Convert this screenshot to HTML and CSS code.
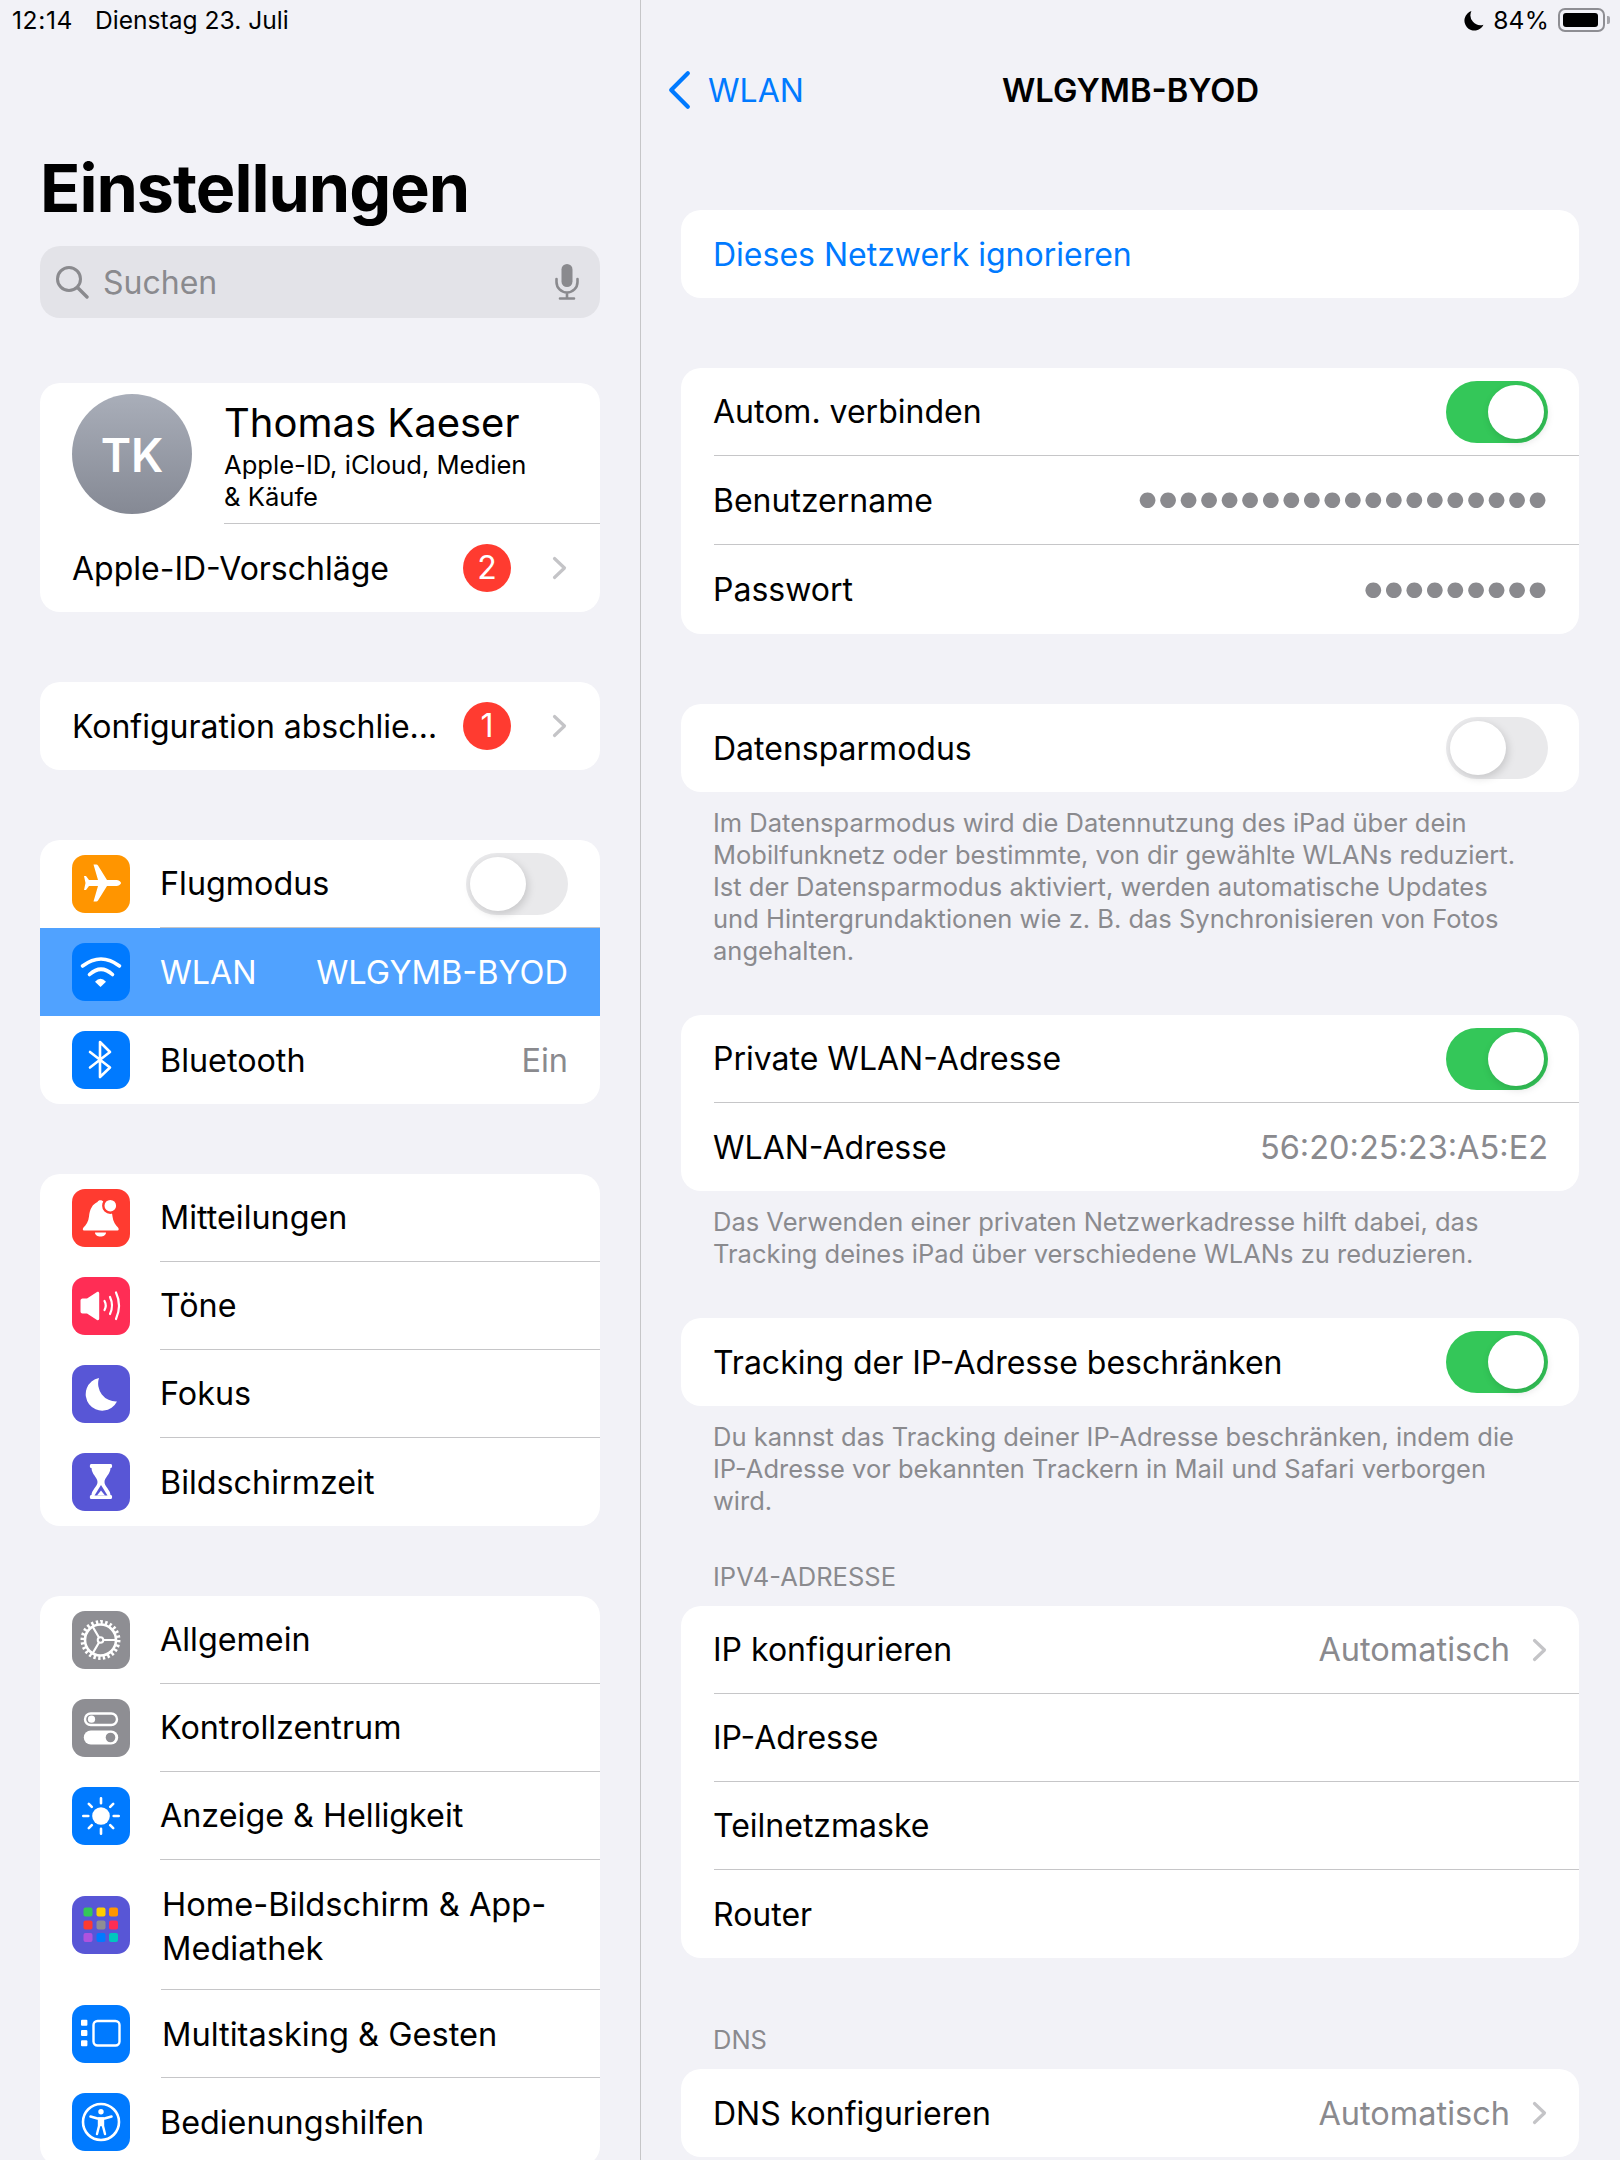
FILE: index.html
```html
<!DOCTYPE html>
<html lang="de">
<head>
  <meta charset="UTF-8">
  <title>Einstellungen</title>
  <link rel="stylesheet" href="styles.css">
</head>
<body>
<div class="page">

  <aside class="sidebar">
    <div class="status">
      <span class="status-time">12:14</span>
      <span>Dienstag 23. Juli</span>
    </div>

    <h1 class="title">Einstellungen</h1>

    <div class="search">
      <svg class="search-icon" viewBox="0 0 34 34"><circle cx="14" cy="14" r="11.5" fill="none" stroke="#8a8a8e" stroke-width="3"/><path d="M22.5 22.5L32 32" stroke="#8a8a8e" stroke-width="3.4" stroke-linecap="round"/></svg>
      <span class="search-text">Suchen</span>
      <svg class="mic-icon" viewBox="0 0 26 36"><rect x="7.5" y="0" width="11" height="23" rx="5.5" fill="#8a8a8e"/><path d="M2.5 15v3a10.5 10.5 0 0 0 21 0v-3M13 29v5M6 34.5h14" fill="none" stroke="#8a8a8e" stroke-width="2.6" stroke-linecap="round"/></svg>
    </div>

    <section class="card">
      <div class="profile">
        <div class="avatar">TK</div>
        <div class="profile-body">
          <div class="profile-name">Thomas Kaeser</div>
          <div class="profile-sub">Apple-ID, iCloud, Medien<br>&amp; Käufe</div>
        </div>
      </div>
      <div class="row row-plain">
        <div class="row-body">
          <span class="grow">Apple-ID-Vorschläge</span>
          <span class="badge">2</span>
          <svg class="chevron" viewBox="0 0 15 24"><path d="M2.5 2.5L12.5 12L2.5 21.5"/></svg>
        </div>
      </div>
    </section>

    <section class="card">
      <div class="row row-plain">
        <div class="row-body">
          <span class="grow clip">Konfiguration abschlie…</span>
          <span class="badge">1</span>
          <svg class="chevron" viewBox="0 0 15 24"><path d="M2.5 2.5L12.5 12L2.5 21.5"/></svg>
        </div>
      </div>
    </section>

    <section class="card">
      <div class="row">
        <svg class="icon" viewBox="0 0 58 58"><rect width="58" height="58" rx="13" fill="#ff9500"/><path d="M49 28c0 1.5-2.5 3-5 3H35L26 45.5c-.4.7-1 1-1.7 1H21.5L26 31H17l-3 4h-2l1.5-7-1.5-7h2l3 4h9L21.5 9.5h2.8c.7 0 1.3.3 1.7 1L35 25h9c2.5 0 5 1.5 5 3z" fill="#fff"/></svg>
        <div class="row-body">
          <span class="grow">Flugmodus</span>
          <span class="switch"></span>
        </div>
      </div>
      <div class="row row-selected">
        <svg class="icon" viewBox="0 0 58 58"><rect width="58" height="58" rx="13" fill="#007aff"/><path d="M10.5 23Q29 9 47.5 23M17.5 31.5Q29 21 40.5 31.5" fill="none" stroke="#fff" stroke-width="3.6" stroke-linecap="round"/><path d="M23 38.7Q28.5 33 34 38.7L28.5 44z" fill="#fff"/></svg>
        <div class="row-body">
          <span class="grow">WLAN</span>
          <span class="selected-value">WLGYMB-BYOD</span>
        </div>
      </div>
      <div class="row">
        <svg class="icon" viewBox="0 0 58 58"><rect width="58" height="58" rx="13" fill="#007aff"/><path d="M18 21L38 36.5L28 46V11L38 21L18 36.5" fill="none" stroke="#fff" stroke-width="2.6" stroke-linecap="round" stroke-linejoin="round"/></svg>
        <div class="row-body">
          <span class="grow">Bluetooth</span>
          <span class="value">Ein</span>
        </div>
      </div>
    </section>

    <section class="card">
      <div class="row">
        <svg class="icon" viewBox="0 0 58 58"><rect width="58" height="58" rx="13" fill="#ff3b30"/><path d="M12 41.5c-1.5 0-1.5-2-.5-3 2.5-2.5 5-6 5.5-11 .6-7 3.5-12.5 8.5-14.5.8-2.5 5-2.5 6 0 5 2 8.5 7.5 9 14.5.5 5 3 8.5 5.5 11 1 1 1 3-.5 3zM23 43.5h11c0 2.5-2.5 4-5.5 4s-5.5-1.5-5.5-4z" fill="#fff"/><circle cx="38.3" cy="16.7" r="7" fill="#fff" stroke="#ff3b30" stroke-width="2.4"/></svg>
        <div class="row-body"><span class="grow">Mitteilungen</span></div>
      </div>
      <div class="row">
        <svg class="icon" viewBox="0 0 58 58"><rect width="58" height="58" rx="13" fill="#ff2d55"/><path d="M8.5 23.5c0-1 .8-2 2-2h4.5l10-6.5c1.2-.7 2.2 0 2.2 1.2v25.6c0 1.2-1 1.9-2.2 1.2l-10-6.5h-4.5c-1.2 0-2-1-2-2z" fill="#fff"/><path d="M32.5 24Q35 28.5 32.5 33M38 20Q42 28.5 38 37M44 15.5Q50 28.5 44 42" fill="none" stroke="#fff" stroke-width="2.2" stroke-linecap="round"/></svg>
        <div class="row-body"><span class="grow">Töne</span></div>
      </div>
      <div class="row">
        <svg class="icon" viewBox="0 0 58 58"><rect width="58" height="58" rx="13" fill="#5856d6"/><path d="M27 13A16.5 16.5 0 1 0 45 36.5A18 18 0 0 1 27 13z" fill="#fff"/></svg>
        <div class="row-body"><span class="grow">Fokus</span></div>
      </div>
      <div class="row">
        <svg class="icon" viewBox="0 0 58 58"><rect width="58" height="58" rx="13" fill="#5856d6"/><path d="M19 11h20c1.5 0 1.5 4 0 4h-.5c0 6-6 9.5-6 14s6 8 6 13h.5c1.5 0 1.5 4 0 4H19c-1.5 0-1.5-4 0-4h.5c0-5 6-8.5 6-13s-6-8-6-14H19c-1.5 0-1.5-4 0-4z" fill="#fff"/><path d="M29 32L35.5 42.5H22.5z" fill="#5856d6"/><path d="M29 37.5L33 42.5H25z" fill="#fff"/></svg>
        <div class="row-body"><span class="grow">Bildschirmzeit</span></div>
      </div>
    </section>

    <section class="card">
      <div class="row">
        <svg class="icon" viewBox="0 0 58 58"><rect width="58" height="58" rx="13" fill="#8e8e93"/><circle cx="28.5" cy="29" r="18" fill="none" stroke="#fff" stroke-width="4" pathLength="48" stroke-dasharray="1 1"/><circle cx="28.5" cy="29" r="15.5" fill="none" stroke="#fff" stroke-width="2.6"/><circle cx="28.5" cy="29" r="2.8" fill="none" stroke="#fff" stroke-width="2"/><path d="M31.5 29H44M27 26.5L20.7 15.7M27 31.5L20.7 42.3" stroke="#fff" stroke-width="2.2"/></svg>
        <div class="row-body"><span class="grow">Allgemein</span></div>
      </div>
      <div class="row">
        <svg class="icon" viewBox="0 0 58 58"><rect width="58" height="58" rx="13" fill="#8e8e93"/><rect x="13" y="14.5" width="32" height="11.5" rx="5.75" fill="none" stroke="#fff" stroke-width="2.4"/><circle cx="19.5" cy="20.2" r="3.6" fill="#fff"/><rect x="11.8" y="31.5" width="34.4" height="14" rx="7" fill="#fff"/><circle cx="38.5" cy="38.5" r="4.8" fill="#8e8e93"/></svg>
        <div class="row-body"><span class="grow">Kontrollzentrum</span></div>
      </div>
      <div class="row">
        <svg class="icon" viewBox="0 0 58 58"><rect width="58" height="58" rx="13" fill="#007aff"/><circle cx="29" cy="29" r="8.8" fill="#fff"/><path d="M29 11.3V16.3M29 41.7V46.7M11.3 29H16.3M41.7 29H46.7M16.8 16.8L19.8 19.8M38.2 38.2L41.2 41.2M16.8 41.2L19.8 38.2M38.2 19.8L41.2 16.8" stroke="#fff" stroke-width="2.6" stroke-linecap="round"/></svg>
        <div class="row-body"><span class="grow">Anzeige &amp; Helligkeit</span></div>
      </div>
      <div class="row row-tall">
        <svg class="icon" viewBox="0 0 58 58"><rect width="58" height="58" rx="13" fill="#5856d6"/><rect x="11.5" y="11.5" width="9" height="9" rx="2" fill="#34c759"/><rect x="24.5" y="11.5" width="9" height="9" rx="2" fill="#ffcc00"/><rect x="37" y="11.5" width="9" height="9" rx="2" fill="#ff9500"/><rect x="11.5" y="24.5" width="9" height="9" rx="2" fill="#ff3b30"/><rect x="24.5" y="24.5" width="9" height="9" rx="2" fill="#8e8e93"/><rect x="37" y="24.5" width="9" height="9" rx="2" fill="#ff2d55"/><rect x="11.5" y="37" width="9" height="9" rx="2" fill="#af52de"/><rect x="24.5" y="37" width="9" height="9" rx="2" fill="#007aff"/><rect x="37" y="37" width="9" height="9" rx="2" fill="#00c7be"/></svg>
        <div class="row-body row-body-shift"><span class="grow">Home-Bildschirm &amp; App-<br>Mediathek</span></div>
      </div>
      <div class="row">
        <svg class="icon" viewBox="0 0 58 58"><rect width="58" height="58" rx="13" fill="#007aff"/><rect x="21.5" y="16" width="26" height="24.5" rx="4" fill="none" stroke="#fff" stroke-width="2.4"/><rect x="9" y="14.7" width="6.4" height="6" rx="1" fill="#fff"/><rect x="9" y="25" width="6.4" height="6" rx="1" fill="#fff"/><rect x="9" y="35.3" width="6.4" height="6" rx="1" fill="#fff"/></svg>
        <div class="row-body row-body-shift"><span class="grow">Multitasking &amp; Gesten</span></div>
      </div>
      <div class="row">
        <svg class="icon" viewBox="0 0 58 58"><rect width="58" height="58" rx="13" fill="#007aff"/><circle cx="29" cy="29" r="18" fill="none" stroke="#fff" stroke-width="2.6"/><circle cx="29" cy="18.8" r="2.7" fill="#fff"/><path d="M18.5 23.5L25.5 25.5H32.5L39.5 23.5" fill="none" stroke="#fff" stroke-width="2.6" stroke-linecap="round" stroke-linejoin="round"/><path d="M29 25.5V32M27 25.5V33L25 41M31 25.5V33L33 41" fill="none" stroke="#fff" stroke-width="2.4" stroke-linecap="round"/></svg>
        <div class="row-body"><span class="grow">Bedienungshilfen</span></div>
      </div>
    </section>
  </aside>

  <main class="detail">
    <div class="status status-right">
      <svg class="status-moon" viewBox="0 0 20 20"><path d="M8 1A9.5 9.5 0 1 0 19.5 14A9.5 9.5 0 0 1 8 1z"/></svg>
      <span class="status-level">84%</span>
      <span class="battery"><span class="battery-body"><span class="battery-fill"></span></span></span>
    </div>

    <nav class="nav">
      <div class="nav-back">
        <svg class="nav-chevron" viewBox="0 0 24 38"><path d="M20 3L4 19L20 35"/></svg>
        <span>WLAN</span>
      </div>
      <div class="nav-title">WLGYMB-BYOD</div>
    </nav>

    <section class="card group-first">
      <div class="row row-form"><div class="row-body"><span class="link">Dieses Netzwerk ignorieren</span></div></div>
    </section>

    <section class="card group">
      <div class="row row-form">
        <div class="row-body"><span class="grow">Autom. verbinden</span><span class="switch switch-on"></span></div>
      </div>
      <div class="row row-form row-wide">
        <div class="row-body"><span class="grow">Benutzername</span><span class="dots">••••••••••••••••••••</span></div>
      </div>
      <div class="row row-form row-wide">
        <div class="row-body"><span class="grow">Passwort</span><span class="dots">•••••••••</span></div>
      </div>
    </section>

    <section class="card group">
      <div class="row row-form">
        <div class="row-body"><span class="grow">Datensparmodus</span><span class="switch"></span></div>
      </div>
    </section>
    <p class="note">Im Datensparmodus wird die Datennutzung des iPad über dein<br>Mobilfunknetz oder bestimmte, von dir gewählte WLANs reduziert.<br>Ist der Datensparmodus aktiviert, werden automatische Updates<br>und Hintergrundaktionen wie z. B. das Synchronisieren von Fotos<br>angehalten.</p>

    <section class="card group-note">
      <div class="row row-form">
        <div class="row-body"><span class="grow">Private WLAN-Adresse</span><span class="switch switch-on"></span></div>
      </div>
      <div class="row row-form">
        <div class="row-body"><span class="grow">WLAN-Adresse</span><span class="value">56:20:25:23:A5:E2</span></div>
      </div>
    </section>
    <p class="note">Das Verwenden einer privaten Netzwerkadresse hilft dabei, das<br>Tracking deines iPad über verschiedene WLANs zu reduzieren.</p>

    <section class="card group-note">
      <div class="row row-form">
        <div class="row-body"><span class="grow">Tracking der IP-Adresse beschränken</span><span class="switch switch-on"></span></div>
      </div>
    </section>
    <p class="note">Du kannst das Tracking deiner IP-Adresse beschränken, indem die<br>IP-Adresse vor bekannten Trackern in Mail und Safari verborgen<br>wird.</p>

    <h2 class="section-head section-head-ipv4">IPV4-ADRESSE</h2>
    <section class="card">
      <div class="row row-form">
        <div class="row-body"><span class="grow">IP konfigurieren</span><span class="value value-link">Automatisch</span><svg class="chevron" viewBox="0 0 15 24"><path d="M2.5 2.5L12.5 12L2.5 21.5"/></svg></div>
      </div>
      <div class="row row-form"><div class="row-body"><span class="grow">IP-Adresse</span></div></div>
      <div class="row row-form"><div class="row-body"><span class="grow">Teilnetzmaske</span></div></div>
      <div class="row row-form"><div class="row-body"><span class="grow">Router</span></div></div>
    </section>

    <h2 class="section-head section-head-dns">DNS</h2>
    <section class="card">
      <div class="row row-form">
        <div class="row-body"><span class="grow">DNS konfigurieren</span><span class="value value-link">Automatisch</span><svg class="chevron" viewBox="0 0 15 24"><path d="M2.5 2.5L12.5 12L2.5 21.5"/></svg></div>
      </div>
    </section>
  </main>

</div>
</body>
</html>
```

FILE: styles.css
```css
* {
  box-sizing: border-box;
}

body {
  margin: 0;
  background: #f2f2f7;
  color: #000;
  font-family: Inter, "Liberation Sans", sans-serif;
  font-size: 32px;
}

.page {
  display: grid;
  grid-template-columns: 641px 1fr;
  height: 2160px;
  overflow: hidden;
}

.sidebar {
  padding: 0 40px;
  border-right: 1px solid #c6c6c8;
  font-size: 32.3px;
  overflow: hidden;
}

.detail {
  padding: 0 41px 0 40px;
  overflow: hidden;
}

/* status bar */
.status {
  display: flex;
  align-items: center;
  gap: 22px;
  height: 40px;
  margin-left: -28px;
  font-size: 24.6px;
}

.status-time {
  letter-spacing: 0.6px;
}

.status-right {
  justify-content: flex-end;
  gap: 0;
  margin: 0 -31px 0 0;
}

.status-level {
  letter-spacing: 0.2px;
}

.status-moon {
  width: 21px;
  height: 21px;
  margin-right: 9px;
}

.battery {
  display: flex;
  align-items: center;
  margin-left: 9px;
}

.battery::after {
  content: "";
  width: 3px;
  height: 8px;
  margin-left: 2px;
  background: #a5a5aa;
  border-radius: 0 2px 2px 0;
}

.battery-body {
  display: block;
  width: 47px;
  height: 24px;
  padding: 3px;
  border: 2px solid #8e8e93;
  border-radius: 7px;
}

.battery-fill {
  display: block;
  width: 35px;
  height: 100%;
  background: #000;
  border-radius: 3px;
}

/* sidebar head */
.title {
  margin: 107px 0 17px;
  font-size: 66.5px;
  font-weight: 700;
  line-height: 82px;
  letter-spacing: -1px;
}

.search {
  display: flex;
  align-items: center;
  height: 72px;
  margin-bottom: 65px;
  padding: 0 20px 0 15px;
  background: #e3e3e8;
  border-radius: 20px;
  font-size: 32px;
}

.search-icon {
  width: 34px;
  height: 34px;
  margin-right: 14px;
}

.search-text {
  flex: 1;
  color: #8a8a8e;
}

.mic-icon {
  width: 26px;
  height: 36px;
}

/* cards and rows */
.card {
  margin-bottom: 70px;
  background: #fff;
  border-radius: 20px;
  overflow: hidden;
}

.row {
  display: flex;
  align-items: center;
  height: 88px;
  padding-left: 32px;
}

.row-tall {
  height: 130px;
}

.row-wide {
  height: 89px;
}

.row-form {
  padding-left: 33px;
}

.row-selected {
  background: #50a2ff;
  color: #fff;
}

.icon {
  flex: none;
  width: 58px;
  height: 58px;
  margin-right: 30px;
}

.row-body {
  display: flex;
  flex: 1;
  align-items: center;
  min-width: 0;
  height: 100%;
  padding-right: 32px;
  border-bottom: 1px solid #c6c6c8;
}

.row-form .row-body {
  padding-right: 31px;
}

.row-form .grow,
.row-form .link {
  margin-left: -1px;
}

.row-form .chevron {
  margin-right: 1px;
}

.row:last-child .row-body,
.row-selected .row-body,
.row-plain .row-body {
  border-bottom: none;
}

.row-plain .row-body {
  padding-right: 33px;
  font-size: 32px;
}

.row-body-shift {
  margin-left: 1px;
  font-size: 32.6px;
}

.row-body-shift .grow {
  margin-left: 1px;
}

.row-tall .grow {
  padding-top: 2px;
  line-height: 44px;
}

.grow {
  flex: 1;
}

.clip {
  white-space: nowrap;
}

.value {
  color: #8a8a8e;
  font-size: 32.5px;
}

.selected-value {
  font-size: 32.6px;
}

.value-link {
  margin-right: 22px;
}

.link {
  color: #007aff;
}

.badge {
  flex: none;
  width: 48px;
  height: 48px;
  margin-right: 41px;
  border-radius: 50%;
  background: #ff3b30;
  color: #fff;
  font-size: 32px;
  line-height: 48px;
  text-align: center;
}

.chevron {
  flex: none;
  width: 15px;
  height: 24px;
}

.chevron path {
  fill: none;
  stroke: #c4c4c7;
  stroke-width: 3.2;
  stroke-linecap: round;
  stroke-linejoin: round;
}

.dots {
  margin: 0 4px 6px 0;
  color: #8a8a8e;
  font-size: 50px;
  letter-spacing: -7.6px;
  line-height: 1;
}

/* switch */
.switch {
  display: flex;
  flex: none;
  width: 102px;
  height: 62px;
  padding: 4px;
  background: #e9e9eb;
  border-radius: 31px;
}

.switch::after {
  content: "";
  width: 56px;
  height: 54px;
  background: #fff;
  border-radius: 50%;
  box-shadow: 2px 3px 8px rgba(0, 0, 0, 0.15);
}

.switch-on {
  justify-content: flex-end;
  background: #34c759;
}

/* profile */
.profile {
  display: flex;
  height: 141px;
  padding: 11px 0 0 32px;
}

.avatar {
  flex: none;
  width: 120px;
  height: 120px;
  margin-right: 32px;
  background: linear-gradient(#a9aeb9, #858994);
  border-radius: 50%;
  color: #fff;
  font-size: 46px;
  font-weight: 600;
  line-height: 122px;
  text-align: center;
}

.profile-body {
  flex: 1;
  border-bottom: 1px solid #c6c6c8;
}

.profile-name {
  margin-top: 3px;
  font-size: 40px;
  line-height: 52px;
}

.profile-sub {
  font-size: 25.6px;
  line-height: 32px;
}

/* detail pane */
.nav {
  display: grid;
  grid-template-columns: 1fr auto 1fr;
  align-items: center;
  height: 70px;
  margin: 15px -15px 0 -14px;
}

.nav-back {
  display: flex;
  align-items: center;
  gap: 16px;
  color: #007aff;
}

.nav-chevron {
  width: 25px;
  height: 40px;
}

.nav-chevron path {
  fill: none;
  stroke: #007aff;
  stroke-width: 4;
  stroke-linecap: round;
  stroke-linejoin: round;
}

.nav-title {
  font-size: 32.7px;
  font-weight: 600;
}

.group-first {
  margin-top: 85px;
}

.group-note {
  margin-top: 48px;
  margin-bottom: 0;
}

.group + .note {
  margin-top: -55px;
}

.note {
  margin: 15px 32px 0;
  color: #8a8a8e;
  font-size: 25.5px;
  line-height: 32px;
}

.section-head {
  margin: 0 32px 13px;
  color: #8a8a8e;
  font-size: 25.5px;
  font-weight: 400;
  line-height: 32px;
}

.section-head-ipv4 {
  margin-top: 44px;
}

.section-head-dns {
  margin-top: -4px;
}
```
